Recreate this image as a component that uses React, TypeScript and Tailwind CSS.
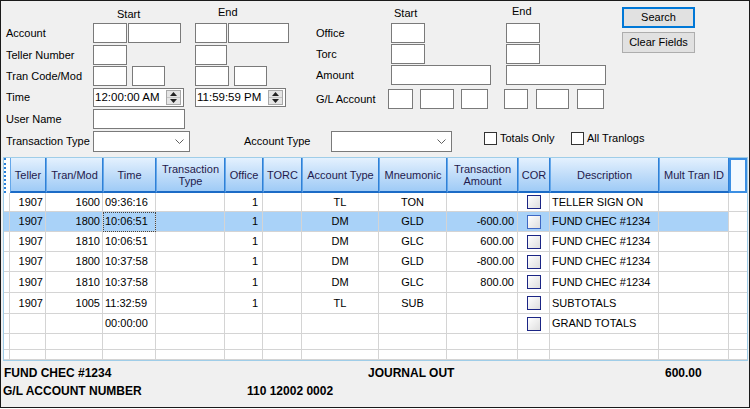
import React from 'react';

const TextBox = ({ className = '' }: { className?: string }) => (
  <div className={`h-[20px] bg-white border border-[#7a7a7a] shrink-0 ${className}`} />
);

const Chevron = () => (
  <svg width="9" height="5" viewBox="0 0 9 5" className="shrink-0">
    <polyline points="0.5,0.5 4.5,4.5 8.5,0.5" fill="none" stroke="#606060" strokeWidth="1" />
  </svg>
);

const Combo = ({ className = '' }: { className?: string }) => (
  <div className={`h-[21px] bg-white border border-[#7a7a7a] shrink-0 flex items-center justify-end pr-[5px] ${className}`}>
    <Chevron />
  </div>
);

const TimePicker = ({ value }: { value: string }) => (
  <div className="h-[19px] w-[91px] bg-white border border-[#7a7a7a] shrink-0 flex items-center pl-[1px] pr-[2px]">
    <span className="flex-1 text-[11.5px] text-black leading-none">{value}</span>
    <div className="w-[15px] h-[15px] border border-[#a9a9a9] bg-[#e5e5e5] flex flex-col">
      <div className="flex-1 flex items-center justify-center border-b border-[#c4c4c4]">
        <svg width="7" height="4" viewBox="0 0 7 4">
          <polygon points="3.5,0 7,4 0,4" fill="#222" />
        </svg>
      </div>
      <div className="flex-1 flex items-center justify-center">
        <svg width="7" height="4" viewBox="0 0 7 4">
          <polygon points="0,0 7,0 3.5,4" fill="#222" />
        </svg>
      </div>
    </div>
  </div>
);

const CheckBox = () => <div className="w-[13px] h-[13px] bg-white border border-[#333] shrink-0" />;

type Col = { label: React.ReactNode; w: string; cell: string };

const cols: Col[] = [
  { label: 'Teller', w: 'w-[36px]', cell: 'justify-end pr-[2px]' },
  { label: 'Tran/Mod', w: 'w-[57px]', cell: 'justify-end pr-[2px]' },
  { label: 'Time', w: 'w-[53px]', cell: 'justify-start pl-[2px]' },
  { label: <>Transaction<br />Type</>, w: 'w-[69px]', cell: 'justify-start pl-[2px]' },
  { label: 'Office', w: 'w-[38px]', cell: 'justify-end pr-[4px]' },
  { label: 'TORC', w: 'w-[39px]', cell: 'justify-center' },
  { label: 'Account Type', w: 'w-[77px]', cell: 'justify-center' },
  { label: 'Mneumonic', w: 'w-[68px]', cell: 'justify-center' },
  { label: <>Transaction<br />Amount</>, w: 'w-[71px]', cell: 'justify-end pr-[3px]' },
  { label: 'COR', w: 'w-[32px]', cell: 'justify-center' },
  { label: 'Description', w: 'w-[109px]', cell: 'justify-start pl-[2px]' },
  { label: 'Mult Tran ID', w: 'w-[70px]', cell: 'justify-start pl-[2px]' },
];

type Row = { h: string; values: string[]; cor: boolean; selected?: boolean };

const rows: Row[] = [
  { h: 'h-[19px]', values: ['1907', '1600', '09:36:16', '', '1', '', 'TL', 'TON', '', '', 'TELLER SIGN ON', ''], cor: true },
  { h: 'h-[20px]', values: ['1907', '1800', '10:06:51', '', '1', '', 'DM', 'GLD', '-600.00', '', 'FUND CHEC #1234', ''], cor: true, selected: true },
  { h: 'h-[20px]', values: ['1907', '1810', '10:06:51', '', '1', '', 'DM', 'GLC', '600.00', '', 'FUND CHEC #1234', ''], cor: true },
  { h: 'h-[20px]', values: ['1907', '1800', '10:37:58', '', '1', '', 'DM', 'GLD', '-800.00', '', 'FUND CHEC #1234', ''], cor: true },
  { h: 'h-[21px]', values: ['1907', '1810', '10:37:58', '', '1', '', 'DM', 'GLC', '800.00', '', 'FUND CHEC #1234', ''], cor: true },
  { h: 'h-[21px]', values: ['1907', '1005', '11:32:59', '', '1', '', 'TL', 'SUB', '', '', 'SUBTOTALS', ''], cor: true },
  { h: 'h-[20px]', values: ['', '', '00:00:00', '', '', '', '', '', '', '', 'GRAND TOTALS', ''], cor: true },
  { h: 'h-[16px]', values: ['', '', '', '', '', '', '', '', '', '', '', ''], cor: false },
  { h: 'h-[10px]', values: ['', '', '', '', '', '', '', '', '', '', '', ''], cor: false },
];

const headerCell =
  'h-full shrink-0 flex items-center justify-center text-center leading-[12px] text-[#1f1a4d] bg-linear-to-b from-[#e4f1fe] via-[#c1ddf9] to-[#9fcbf6] border-l border-l-[#64a7ea] border-r border-r-[#2f80d6] border-b-2 border-b-[#1b6bc6]';

export default function App() {
  return (
    <div className="w-[750px] h-[408px] bg-[#f0f0f0] border border-[#1a1a1a] flex flex-col font-['Liberation_Sans',Arial,sans-serif] text-[11px] text-black overflow-hidden">
      {/* search form */}
      <div className="h-[130px] flex shrink-0">
        <div className="w-[315px] pl-[5px] flex flex-col shrink-0">
          <div className="h-[22px] flex items-start">
            <span className="w-[111px]" />
            <span className="w-[101px] mt-[5px]">Start</span>
            <span className="mt-[3px]">End</span>
          </div>
          <div className="flex items-center">
            <span className="w-[87px]">Account</span>
            <TextBox className="w-[34px]" />
            <TextBox className="w-[53px] ml-[1px]" />
            <TextBox className="w-[32px] ml-[14px]" />
            <TextBox className="w-[61px] ml-[1px]" />
          </div>
          <div className="flex items-center mt-[2px]">
            <span className="w-[87px]">Teller Number</span>
            <TextBox className="w-[34px]" />
            <TextBox className="w-[32px] ml-[68px]" />
          </div>
          <div className="flex items-center mt-[1px]">
            <span className="w-[87px]">Tran Code/Mod</span>
            <TextBox className="w-[34px]" />
            <TextBox className="w-[33px] ml-[5px]" />
            <TextBox className="w-[34px] ml-[30px]" />
            <TextBox className="w-[33px] ml-[5px]" />
          </div>
          <div className="flex items-center mt-[2px]">
            <span className="w-[87px]">Time</span>
            <TimePicker value="12:00:00 AM" />
            <div className="ml-[11px]">
              <TimePicker value="11:59:59 PM" />
            </div>
          </div>
          <div className="flex items-center mt-[2px]">
            <span className="w-[87px]">User Name</span>
            <TextBox className="w-[92px]" />
          </div>
        </div>

        <div className="w-[306px] flex flex-col shrink-0">
          <div className="h-[22px] flex items-start">
            <span className="w-[78px]" />
            <span className="w-[118px] mt-[4px]">Start</span>
            <span className="mt-[2px]">End</span>
          </div>
          <div className="flex items-center">
            <span className="w-[75px]">Office</span>
            <TextBox className="w-[34px]" />
            <TextBox className="w-[34px] ml-[81px]" />
          </div>
          <div className="flex items-center mt-[1px]">
            <span className="w-[75px]">Torc</span>
            <TextBox className="w-[34px]" />
            <TextBox className="w-[34px] ml-[81px]" />
          </div>
          <div className="flex items-center mt-[1px]">
            <span className="w-[75px]">Amount</span>
            <TextBox className="w-[100px]" />
            <TextBox className="w-[100px] ml-[15px]" />
          </div>
          <div className="flex items-center mt-[4px]">
            <span className="w-[72px]">G/L Account</span>
            <TextBox className="w-[25px]" />
            <TextBox className="w-[34px] ml-[7px]" />
            <TextBox className="w-[27px] ml-[7px]" />
            <TextBox className="w-[24px] ml-[16px]" />
            <TextBox className="w-[33px] ml-[8px]" />
            <TextBox className="w-[27px] ml-[8px]" />
          </div>
        </div>

        <div className="flex flex-col pt-[6px] shrink-0">
          <button className="w-[73px] h-[21px] bg-[#e1e1e1] border-2 border-[#0078d7] flex items-center justify-center">
            Search
          </button>
          <button className="w-[73px] h-[21px] mt-[4px] bg-[#e1e1e1] border border-[#adadad] flex items-center justify-center">
            Clear Fields
          </button>
        </div>
      </div>

      <div className="h-[21px] flex items-center pl-[5px] shrink-0">
        <span className="w-[87px]">Transaction Type</span>
        <Combo className="w-[97px]" />
        <span className="w-[87px] ml-[54px]">Account Type</span>
        <Combo className="w-[121px]" />
        <div className="flex items-center self-start -mt-[1px] ml-[32px]">
          <CheckBox />
          <span className="ml-[3px] w-[71px]">Totals Only</span>
          <CheckBox />
          <span className="ml-[3px]">All Tranlogs</span>
        </div>
      </div>

      {/* results grid */}
      <div className="mt-[5px] ml-[2px] w-[745px] h-[204px] bg-white border border-[#9fcde8] flex flex-col shrink-0 overflow-hidden">
        <div className="h-[35px] flex shrink-0">
          <div className="w-[6px] h-full shrink-0 border-l-2 border-dotted border-[#2a7fd8]" />
          {cols.map((c, i) => (
            <div key={i} className={`${headerCell} ${c.w}`}>
              <span>{c.label}</span>
            </div>
          ))}
          <div className="flex-1 h-full border-2 border-[#3b8fe3] bg-[#f3f9ff]" />
        </div>
        {rows.map((r, ri) => (
          <div key={ri} className={`flex shrink-0 ${r.h}`}>
            <div className={`w-[6px] shrink-0 border-r border-b border-[#d4d4d4] ${r.selected ? 'bg-[#a9d2f8]' : ''}`} />
            {cols.map((c, ci) => (
              <div
                key={ci}
                className={`${c.w} shrink-0 flex items-center border-r border-b border-[#d4d4d4] leading-none whitespace-nowrap overflow-hidden ${c.cell} ${
                  r.selected ? 'bg-[#a9d2f8]' : ''
                } ${r.selected && ci === 2 ? 'outline-1 outline-dotted outline-[#444] -outline-offset-1' : ''}`}
              >
                {ci === 9 && r.cor ? (
                  <span
                    className={`w-[14px] h-[14px] border bg-linear-to-br from-white to-[#dedede] ${
                      r.selected ? 'border-[#3e67c4] from-[#b8dafb] to-[#a0c9f2]' : 'border-[#1b2585]'
                    }`}
                  />
                ) : (
                  r.values[ci]
                )}
              </div>
            ))}
            <div className="flex-1 border-b border-[#d4d4d4]" />
          </div>
        ))}
      </div>

      {/* footer */}
      <div className="flex flex-col pt-[3px] font-bold text-[12px] leading-[18px]">
        <div className="flex pl-[3px]">
          <span className="w-[364px]">FUND CHEC #1234</span>
          <span className="w-[297px]">JOURNAL OUT</span>
          <span>600.00</span>
        </div>
        <div className="flex pl-[2px]">
          <span className="w-[244px]">G/L ACCOUNT NUMBER</span>
          <span>110 12002 0002</span>
        </div>
      </div>
    </div>
  );
}
